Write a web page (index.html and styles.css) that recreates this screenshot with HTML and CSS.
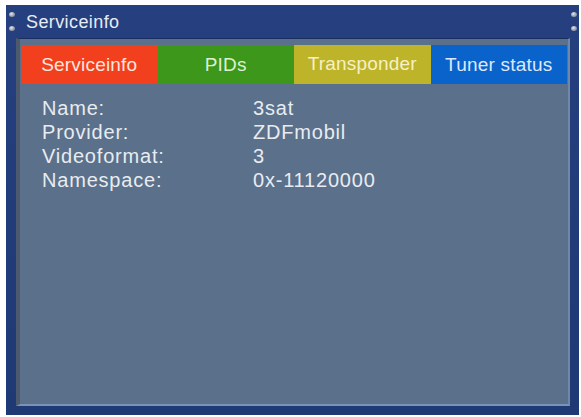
FILE: index.html
```html
<!DOCTYPE html>
<html>
<head>
<meta charset="utf-8">
<link rel="stylesheet" href="styles.css">
</head>
<body>
<div class="frame">
  <span class="screw s1"></span><span class="screw s2"></span>
  <span class="screw s3"></span><span class="screw s4"></span>
  <div class="titlebar">Serviceinfo</div>
  <div class="panel">
    <div class="tabs">
      <div class="tab red">Serviceinfo</div>
      <div class="tab green">PIDs</div>
      <div class="tab yellow">Transponder</div>
      <div class="tab blue">Tuner status</div>
    </div>
    <div class="info">
      <div class="lbl">Name:</div><div class="val">3sat</div>
      <div class="lbl">Provider:</div><div class="val">ZDFmobil</div>
      <div class="lbl">Videoformat:</div><div class="val">3</div>
      <div class="lbl">Namespace:</div><div class="val">0x-11120000</div>
    </div>
  </div>
</div>
</body>
</html>
```
FILE: styles.css
```css
html, body {
  margin: 0;
  padding: 0;
  background: #ffffff;
}
body {
  font-family: "Liberation Sans", Arial, sans-serif;
}
.frame {
  position: relative;
  margin: 5px 0 0 6px;
  width: 573px;
  height: 410px;
  background: linear-gradient(180deg, #26407f 0%, #223c7a 50%, #1f3974 100%);
  display: flex;
  flex-direction: column;
  box-sizing: border-box;
}
.screw {
  position: absolute;
  width: 6px;
  height: 5px;
  border-radius: 50%;
  background: radial-gradient(circle at 40% 35%, #e2e6ec 0%, #9aa2b0 55%, #556078 100%);
}
.s1 { left: 3px; top: 7px; }
.s2 { left: 3px; top: 21px; }
.s3 { right: 2px; top: 7px; }
.s4 { right: 2px; top: 21px; }
.titlebar {
  height: 33px;
  box-sizing: border-box;
  padding: 7px 0 0 20px;
  color: #e6ecf4;
  font-size: 18px;
  letter-spacing: 0.4px;
}
.panel {
  flex: 1;
  margin: 0 9px 9px 10px;
  background: #5b708a;
  border-left: 4px solid #4b5a6c;
  border-right: 2px solid #7088a8;
  border-bottom: 2px solid #7a92b6;
  border-top: 1px solid #1a2f60;
  padding: 6px 1px 0 1px;
  box-sizing: border-box;
}
.tabs {
  display: flex;
  height: 39px;
}
.tab {
  flex: 1;
  display: flex;
  align-items: center;
  justify-content: center;
  font-size: 19px;
  letter-spacing: 0.2px;
  padding-top: 1px;
  box-sizing: border-box;
}
.red { background: #f2401f; color: #fde6dc; }
.green { background: #3c971b; color: #dcf0d2; }
.yellow { background: #bdb42a; color: #f7f0c4; padding-top: 0; padding-bottom: 2px; }
.blue { background: #0963cb; color: #dce9fb; }
.info {
  display: grid;
  grid-template-columns: 211px auto;
  padding: 12px 0 0 21px;
  font-size: 20px;
  line-height: 24px;
  color: #e8ecf1;
  letter-spacing: 0.8px;
}
```
